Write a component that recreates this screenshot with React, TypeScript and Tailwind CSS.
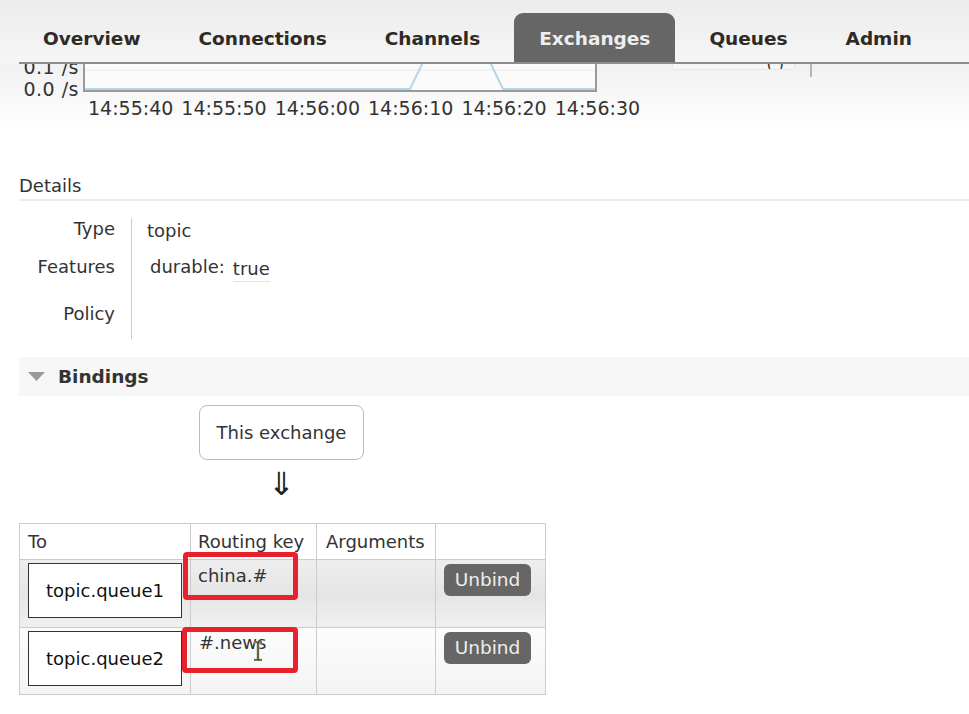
import React from "react";

const tabs = ["Overview", "Connections", "Channels", "Exchanges", "Queues", "Admin"];
const times = ["14:55:40", "14:55:50", "14:56:00", "14:56:10", "14:56:20", "14:56:30"];

function Header() {
  return (
    <div className="h-[64px] bg-gradient-to-b from-[#ececec] to-[#f6f6f6] flex items-end">
      <div className="ml-[19px] flex-1 border-b-2 border-[#8c8c8c] flex items-end gap-[10px] h-[51px]">
        {tabs.map((t) => (
          <div
            key={t}
            className={
              t === "Exchanges"
                ? "h-[49px] px-[25px] pt-[2px] flex items-center rounded-t-[9px] bg-[#666666] text-[#eeeeee] font-bold text-[18.5px]"
                : "h-[49px] px-[24px] pt-[2px] flex items-center text-[#2e2a26] font-bold text-[18.5px]"
            }
          >
            {t}
          </div>
        ))}
      </div>
    </div>
  );
}

function Chart() {
  return (
    <div className="h-[66px] overflow-hidden bg-gradient-to-b from-[#f1f1f1] to-white">
      <div className="h-[36px] mt-[-8px] flex">
        <div className="w-[79px] text-right text-[19px] tracking-[0.5px] leading-[22px] text-[#333]">
          <div>0.1 /s</div>
          <div>0.0 /s</div>
        </div>
        <svg width="516" height="36" viewBox="0 0 516 36" className="ml-[4px]">
          <rect x="1" y="0" width="513" height="35" fill="#fbfbfb" />
          <line x1="2" y1="14" x2="513" y2="14" stroke="#e8e8e8" strokeWidth="1" />
          <polyline
            points="2,33 327,33 343,0 404,0 420,33 513,33"
            fill="none"
            stroke="#b5d6e8"
            strokeWidth="2"
          />
          <line x1="1" y1="0" x2="1" y2="36" stroke="#9a9a9a" strokeWidth="2" />
          <line x1="0" y1="35" x2="514" y2="35" stroke="#9a9a9a" strokeWidth="2" />
          <line x1="513" y1="0" x2="513" y2="36" stroke="#9a9a9a" strokeWidth="2" />
        </svg>
        <div className="ml-[73px] w-[123px] h-[14px] border border-[#e6e6e6] rounded-b-[4px] bg-[#f7f7f7] flex items-end justify-end gap-[6px] pr-[10px] overflow-hidden">
          <span className="text-[16px] text-[#333] leading-[16px] mb-[-3px]">( )</span>
        </div>
        <div className="ml-[15px] w-[2px] h-[21px] bg-[#b5b5b5]" />
      </div>
      <div className="ml-[88px] mt-[5px] flex gap-[8px] text-[19px] leading-[22px] text-[#333]">
        {times.map((t) => (
          <span key={t}>{t}</span>
        ))}
      </div>
    </div>
  );
}

function Details() {
  return (
    <div>
      <div className="ml-[19px] mt-[44px] h-[27px] border-b-2 border-[#ececec] text-[18px] leading-[24px] text-[#333]">
        Details
      </div>
      <div className="ml-[19px] mt-[17px] flex text-[18px] leading-[22px] text-[#333]">
        <div className="w-[96px] text-right">
          <div className="h-[38px]">Type</div>
          <div className="h-[47px]">Features</div>
          <div className="h-[36px]">Policy</div>
        </div>
        <div className="ml-[16px] border-l border-[#cccccc] pl-[15px] h-[121px]">
          <div className="h-[38px] pt-[2px]">topic</div>
          <div className="h-[47px] flex items-start pl-[3px]">
            <span>durable:</span>
            <span className="ml-[8px] mt-[2px] border-b border-[#e2e2e2] pb-[1px]">true</span>
          </div>
          <div className="h-[36px]" />
        </div>
      </div>
    </div>
  );
}

function QueueBox({ name }: { name: string }) {
  return (
    <div className="w-[154px] h-[55px] border border-[#333] bg-white flex items-center justify-center text-[18px] text-[#111]">
      {name}
    </div>
  );
}

function UnbindButton() {
  return (
    <div className="w-[87px] h-[32px] rounded-[6px] bg-[#666666] text-[#eeeeee] text-[18.5px] flex items-center justify-center">
      Unbind
    </div>
  );
}

function Bindings() {
  return (
    <div>
      <div className="ml-[19px] mt-[18px] h-[39px] bg-[#f7f7f7] flex items-center">
        <svg width="17" height="9" viewBox="0 0 17 9" className="ml-[9px]">
          <polygon points="0,0 17,0 8.5,9" fill="#9a9a9a" />
        </svg>
        <span className="ml-[13px] font-bold text-[18.5px] text-[#333]">Bindings</span>
      </div>
      <div className="ml-[199px] mt-[9px] w-[165px] flex flex-col items-center">
        <div className="w-[165px] h-[55px] border border-[#bbbbbb] rounded-[8px] flex items-center justify-center text-[18px] text-[#333]">
          This exchange
        </div>
        <div className="h-[63px] flex justify-center">
          <span className="mt-[7px] leading-[34px] text-[32px] text-[#222]">⇓</span>
        </div>
      </div>
      <div className="ml-[19px] relative w-[527px]">
        <table className="border-collapse text-[18px] text-[#333]">
          <thead>
            <tr className="h-[36px] bg-white">
              <th className="w-[171px] border border-[#cccccc] text-left font-normal px-[8px]">To</th>
              <th className="w-[126px] border border-[#cccccc] text-left font-normal px-[7px]">Routing key</th>
              <th className="w-[119px] border border-[#cccccc] text-left font-normal px-[9px]">Arguments</th>
              <th className="w-[110px] border border-[#cccccc]" />
            </tr>
          </thead>
          <tbody>
            <tr className="h-[68px] bg-gradient-to-b from-[#eeeeee] via-[#e5e5e5] to-[#f0f0f0]">
              <td className="border border-[#cccccc] align-top pl-[8px] pt-[3px]">
                <QueueBox name="topic.queue1" />
              </td>
              <td className="border border-[#cccccc] align-top px-[7px] pt-[5px] leading-[22px]">china.#</td>
              <td className="border border-[#cccccc]" />
              <td className="border border-[#cccccc] align-top pl-[8px] pt-[4px]">
                <UnbindButton />
              </td>
            </tr>
            <tr className="h-[67px] bg-gradient-to-b from-[#fcfcfc] to-[#f4f4f4]">
              <td className="border border-[#cccccc] align-top pl-[8px] pt-[3px]">
                <QueueBox name="topic.queue2" />
              </td>
              <td className="border border-[#cccccc] align-top px-[8px] pt-[4px] leading-[22px]">#.news</td>
              <td className="border border-[#cccccc]" />
              <td className="border border-[#cccccc] align-top pl-[8px] pt-[4px]">
                <UnbindButton />
              </td>
            </tr>
          </tbody>
        </table>
        <div className="absolute left-[164px] top-[29px] w-[115px] h-[48px] border-[5px] border-[#e8222c] rounded-[4px]" />
        <div className="absolute left-[163px] top-[104px] w-[116px] h-[46px] border-[5px] border-[#e8222c] rounded-[4px]" />
        <svg width="10" height="20" viewBox="0 0 10 20" className="absolute left-[234px] top-[118px]">
          <path d="M1 1 H9 M5 1 V19 M1 19 H9" stroke="#c8c890" strokeWidth="3" fill="none" />
          <path d="M1 1 H9 M5 1 V19 M1 19 H9" stroke="#222" strokeWidth="1.2" fill="none" />
        </svg>
      </div>
    </div>
  );
}

export default function App() {
  return (
    <div className="w-[969px] h-[714px] overflow-hidden bg-white font-['DejaVu_Sans',Verdana,sans-serif]">
      <Header />
      <Chart />
      <Details />
      <Bindings />
    </div>
  );
}
